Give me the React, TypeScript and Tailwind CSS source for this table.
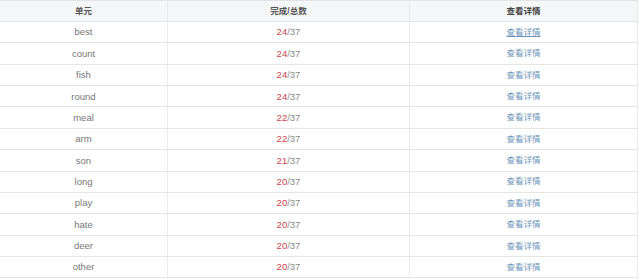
const rows: [string, number][] = [
  ["best", 24],
  ["count", 24],
  ["fish", 24],
  ["round", 24],
  ["meal", 22],
  ["arm", 22],
  ["son", 21],
  ["long", 20],
  ["play", 20],
  ["hate", 20],
  ["deer", 20],
  ["other", 20],
];

export default function App() {
  return (
    <div className="w-[640px] h-[280px] overflow-hidden bg-white font-['Liberation_Sans','Noto_Sans_CJK_SC',sans-serif] leading-none">
      <div className="w-[638px]">
        {/* 表头 */}
        <div className="grid grid-cols-[168px_242px_1fr] h-[22px] bg-[#f5f6f8] border-t border-b border-[#e2e3e6]">
          <div className="flex items-center justify-center border-r border-[#e8e9eb] text-[8.5px] font-semibold text-[#555]">单元</div>
          <div className="flex items-center justify-center border-r border-[#e8e9eb] text-[8.5px] font-semibold text-[#555]">完成/总数</div>
          <div className="flex items-center justify-center border-r border-[#e8e9eb] text-[8.5px] font-semibold text-[#444]">查看详情</div>
        </div>
        {rows.map(([word, done], i) => (
          <div key={word} className="grid grid-cols-[168px_242px_1fr] h-[21.36px] border-b border-[#e6e6e6]">
            <div className="flex items-center justify-center border-r border-[#ececec] text-[9.5px] text-[#777]">{word}</div>
            <div className="flex items-center justify-center border-r border-[#ececec] text-[9.5px] text-[#8a8a8a]">
              <span className="text-[#c8454f]">{done}</span>/37
            </div>
            <div className="flex items-center justify-center border-r border-[#ececec]">
              <a className={`text-[8.5px] text-[#6d94ba] ${i === 0 ? "underline" : ""}`}>查看详情</a>
            </div>
          </div>
        ))}
      </div>
    </div>
  );
}
